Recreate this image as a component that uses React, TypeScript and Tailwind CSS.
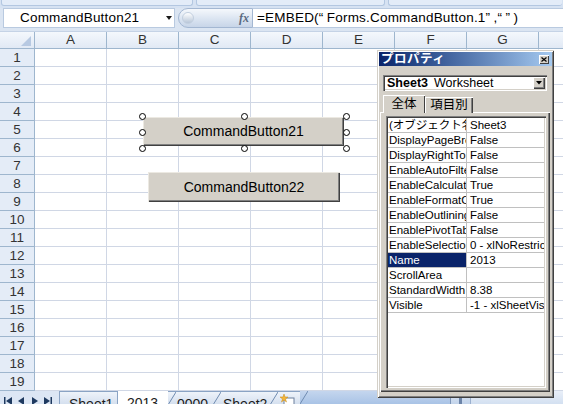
import React from "react";

const FONT = "font-['Liberation_Sans','Noto_Sans_CJK_JP',sans-serif]";

const COLS = ["A", "B", "C", "D", "E", "F", "G"];
const ROWS = Array.from({ length: 19 }, (_, i) => i + 1);

const PROPS: [string, string][] = [
  ["(オブジェクト名)", "Sheet3"],
  ["DisplayPageBreaks", "False"],
  ["DisplayRightToLeft", "False"],
  ["EnableAutoFilter", "False"],
  ["EnableCalculation", "True"],
  ["EnableFormatConditionsCalculation", "True"],
  ["EnableOutlining", "False"],
  ["EnablePivotTable", "False"],
  ["EnableSelection", "0 - xlNoRestrictions"],
  ["Name", "2013"],
  ["ScrollArea", ""],
  ["StandardWidth", "8.38"],
  ["Visible", "-1 - xlSheetVisible"],
];

// selection handles around CommandButton21 (centre points)
const HANDLES: [number, number][] = [
  [142, 116], [244, 116], [346, 116],
  [142, 132], [346, 132],
  [142, 148], [244, 148], [346, 148],
];

// quote marks get a wider cell, like the Japanese UI font draws them
function Q({ c }: { c: string }) {
  return <span className="inline-block w-[8px] text-left">{c}</span>;
}

function FormulaBar() {
  return (
    <>
      {/* ribbon bottom edge */}
      <div className="h-[8px] bg-[#d6e2f2] flex gap-[3px] px-[1px]">
        <div className="w-[192px] h-[6px] rounded-b-[3px] border-b border-x border-[#b3c7e1] bg-[#e3ecf8]" />
        <div className="w-[189px] h-[6px] rounded-b-[3px] border-b border-x border-[#b3c7e1] bg-[#e3ecf8]" />
        <div className="flex-1 h-[6px] rounded-b-[3px] border-b border-l border-[#b3c7e1] bg-[#e3ecf8]" />
      </div>

      <div className="flex h-[21px] bg-[#dbe5f2]">
        <div className="ml-[3px] w-[172px] h-[20px] bg-white border border-[#b9cae0] relative flex items-center">
          <span className="pl-[16px] text-[13.5px] leading-none text-black tracking-[0.2px]">CommandButton21</span>
          <svg className="absolute left-[162px] top-[7px]" width="6" height="4" viewBox="0 0 6 4">
            <path d="M0 0H6L3 4Z" fill="#1a1a1a" />
          </svg>
        </div>
        <div className="ml-[3px] w-[75px] h-[20px] rounded-l-full border border-[#a3b7d2] bg-gradient-to-b from-[#f5f8fc] via-[#dde6f2] to-[#c7d5e8] relative flex items-center justify-end pr-[3px]">
          <div className="absolute left-[3px] top-[3px] w-[12px] h-[12px] rounded-full bg-gradient-to-b from-[#ffffff] to-[#b8c6d8] border border-[#c2cfdf]" />
          <span className="font-['Liberation_Serif',serif] italic font-bold text-[12px] leading-none text-[#5a6a80]">fx</span>
        </div>
        <div className="flex-1 h-[20px] bg-white border-y border-[#b9cae0] flex items-center pl-[4px]">
          <span className="text-[13.5px] leading-none text-black whitespace-nowrap tracking-[0.2px]">
            =EMBED(<Q c="“" />Forms.CommandButton.1<Q c="”" />,<Q c="“" /><Q c="”" />)
          </span>
        </div>
      </div>
      <div className="h-[3px] bg-[#dbe5f2] border-b border-[#c5d3e6]" />
    </>
  );
}

function Sheet() {
  return (
    <div className="text-[13.5px] text-[#333]">
      {/* column headers */}
      <div className="flex h-[17px] bg-gradient-to-b from-[#f4f8fd] to-[#e1e9f5] border-b border-[#9eb6ce]">
        <div className="w-[35px] border-r border-[#9eb6ce] relative">
          <svg className="absolute right-[3px] bottom-[2px]" width="10" height="10" viewBox="0 0 10 10">
            <path d="M10 0V10H0Z" fill="#b7c9e2" />
          </svg>
        </div>
        {COLS.map((c) => (
          <div key={c} className="w-[72px] border-r border-[#9eb6ce] flex items-center justify-center leading-none">
            {c}
          </div>
        ))}
        <div className="flex-1" />
      </div>

      {ROWS.map((r) => (
        <div key={r} className="flex h-[18px]">
          <div className="w-[35px] bg-[#e4ecf7] border-r border-b border-[#9eb6ce] flex items-center justify-center leading-none">
            {r}
          </div>
          {COLS.map((c) => (
            <div key={c} className="w-[72px] bg-white border-r border-b border-[#d0d7e5]" />
          ))}
          <div className="flex-1 bg-white border-b border-[#d0d7e5]" />
        </div>
      ))}
    </div>
  );
}

function TabSlant() {
  return (
    <svg className="absolute left-0 top-0" width="8" height="13" viewBox="0 0 8 13">
      <path d="M0 13L8 0" stroke="#6f8bb1" strokeWidth="1" />
    </svg>
  );
}

function SheetTabs() {
  return (
    <div className="h-[13px] flex bg-[#c9d9ee] overflow-hidden text-[14px] text-[#1c1c1c]">
      <div className="w-[60px] bg-[#dce6f4] border-r border-[#8aa3c4] flex items-start pl-[4px] pt-[6px]">
        <svg width="48" height="8" viewBox="0 0 48 8">
          <rect x="0" y="0" width="1.5" height="8" fill="#1f3a60" />
          <path d="M8 0V8L2 4Z" fill="#1f3a60" />
          <path d="M20 0V8L14 4Z" fill="#1f3a60" />
          <path d="M28 0V8L34 4Z" fill="#1f3a60" />
          <path d="M40 0V8L46 4Z" fill="#1f3a60" />
          <rect x="46.5" y="0" width="1.5" height="8" fill="#1f3a60" />
        </svg>
      </div>
      <div className="w-[58px] bg-gradient-to-b from-[#eef3fa] to-[#d5e0ef] border-r border-t border-[#8aa3c4] pl-[9px] pt-[4px] leading-[16px]">Sheet1</div>
      <div className="w-[50px] bg-white pl-[9px] pt-[4px] leading-[16px]">2013</div>
      <div className="w-[45px] relative bg-gradient-to-b from-[#eef3fa] to-[#d5e0ef] border-t border-[#8aa3c4] pl-[9px] pt-[4px] leading-[16px]">
        <TabSlant />
        0000
      </div>
      <div className="w-[57px] relative bg-gradient-to-b from-[#eef3fa] to-[#d5e0ef] border-t border-[#8aa3c4] pl-[10px] pt-[4px] leading-[16px]">
        <TabSlant />
        Sheet2
      </div>
      <div className="w-[30px] relative bg-gradient-to-b from-[#eef3fa] to-[#d5e0ef] border-t border-[#8aa3c4]">
        <TabSlant />
        <svg className="absolute left-[10px] top-[2px]" width="16" height="11" viewBox="0 0 16 11">
          <rect x="4" y="4" width="10" height="8" fill="#ffffff" stroke="#6a7e9c" />
          <path d="M4 0L5 3L8 3L5.5 5L6.5 8L4 6L1.5 8L2.5 5L0 3L3 3Z" fill="#f3b53a" stroke="#c98a12" strokeWidth="0.5" />
        </svg>
      </div>
      <div className="w-[10px] relative bg-gradient-to-b from-[#c4d6ee] to-[#a9c3e6]">
        <TabSlant />
      </div>
      <div className="w-[140px] bg-gradient-to-b from-[#c4d6ee] to-[#a9c3e6]" />
      <div className="w-[20px] bg-gradient-to-b from-[#dfe8f5] to-[#c3d4eb] border-l border-[#7d95b8] relative">
        <div className="absolute left-[8px] top-[4px] w-[3px] h-[9px] bg-[#6c84a8]" />
      </div>
      <div className="flex-1 bg-gradient-to-b from-[#e9eff8] to-[#d3e0f1] border-l border-[#9bb0cf]" />
    </div>
  );
}

function CommandButton({ label, className }: { label: string; className: string }) {
  return (
    <div
      className={`absolute bg-[#d4d0c8] flex items-center justify-center text-[14px] text-black shadow-[inset_1px_1px_0_#ece9e2,inset_-1px_-1px_0_#404040,inset_-2px_-2px_0_#808080] ${className}`}
    >
      {label}
    </div>
  );
}

function PropertiesWindow() {
  return (
    <div className="absolute left-[377px] top-[50px] w-[177px] h-[348px] bg-[#d4d0c8] p-[2px] flex flex-col text-black shadow-[inset_1px_1px_0_#d4d0c8,inset_-1px_-1px_0_#404040,inset_2px_2px_0_#ffffff,inset_-2px_-2px_0_#808080]">
      {/* title bar */}
      <div className="h-[14px] flex items-center justify-between bg-gradient-to-r from-[#0a246a] to-[#a6caf0] pl-[2px] pr-[3px]">
        <span className="text-white font-bold text-[12.5px] leading-none tracking-[0.5px]">プロパティ</span>
        <div className="w-[10px] h-[9px] bg-[#d4d0c8] flex items-center justify-center shadow-[inset_1px_1px_0_#ffffff,inset_-1px_-1px_0_#404040]">
          <svg width="6" height="5" viewBox="0 0 6 5">
            <path d="M0.5 0.5L5.5 4.5M5.5 0.5L0.5 4.5" stroke="#000" strokeWidth="1.2" />
          </svg>
        </div>
      </div>

      {/* object combo */}
      <div className="mt-[9px] ml-[4px] mr-[5px] h-[16px] bg-white flex items-center justify-between pl-[4px] pr-[2px] shadow-[inset_1px_1px_0_#808080,inset_2px_2px_0_#404040,inset_-1px_-1px_0_#ffffff,inset_-2px_-2px_0_#d4d0c8]">
        <span className="text-[12.5px] leading-none whitespace-nowrap">
          <span className="font-bold">Sheet3</span>
          <span className="ml-[6px]">Worksheet</span>
        </span>
        <div className="w-[12px] h-[12px] bg-[#d4d0c8] flex items-center justify-center shadow-[inset_1px_1px_0_#ffffff,inset_-1px_-1px_0_#404040,inset_-2px_-2px_0_#808080]">
          <svg width="6" height="4" viewBox="0 0 6 4">
            <path d="M0 0H6L3 3.5Z" fill="#000" />
          </svg>
        </div>
      </div>

      {/* tabs */}
      <div className="mt-[4px] ml-[4px] flex items-end h-[18px] -mb-[1px] relative z-10">
        <div className="w-[42px] h-[18px] bg-[#d4d0c8] flex items-center justify-center text-[12.5px] leading-none shadow-[inset_1px_1px_0_#ffffff,inset_-1px_0_0_#404040]">
          全体
        </div>
        <div className="w-[48px] h-[16px] bg-[#d4d0c8] flex items-center justify-center text-[12.5px] leading-none shadow-[inset_1px_1px_0_#ffffff,inset_-1px_0_0_#404040,inset_-2px_0_0_#808080]">
          項目別
        </div>
      </div>

      {/* tab panel */}
      <div className="ml-[1px] mr-[2px] mb-[4px] flex-1 p-[4px] pl-[6px] shadow-[inset_1px_1px_0_#ffffff,inset_-1px_-1px_0_#404040,inset_-2px_-2px_0_#808080]">
        <div className="h-full bg-white p-[2px] shadow-[inset_1px_1px_0_#808080,inset_2px_2px_0_#404040,inset_-1px_-1px_0_#ffffff,inset_-2px_-2px_0_#d4d0c8]">
          {PROPS.map(([name, value]) => {
            const sel = name === "Name";
            return (
              <div key={name} className="flex h-[15px] border-b border-[#c0c0c0] text-[11.5px] leading-[14px]">
                <div
                  className={`w-[79px] border-r border-[#c0c0c0] pl-[1px] overflow-hidden whitespace-nowrap ${sel ? "bg-[#0a246a] text-white" : ""}`}
                >
                  {name}
                </div>
                <div className="flex-1 pl-[3px] overflow-hidden whitespace-nowrap">{value}</div>
              </div>
            );
          })}
        </div>
      </div>
    </div>
  );
}

export default function App() {
  return (
    <div className={`relative w-[563px] h-[404px] overflow-hidden bg-white ${FONT}`}>
      <FormulaBar />
      <Sheet />
      <SheetTabs />

      <CommandButton label="CommandButton21" className="left-[143px] top-[117px] w-[201px] h-[29px]" />
      <CommandButton label="CommandButton22" className="left-[148px] top-[172px] w-[192px] h-[30px]" />

      {HANDLES.map(([x, y]) => (
        <div
          key={`${x}-${y}`}
          className="absolute w-[7px] h-[7px] rounded-full bg-white border border-black"
          style={{ left: x - 3.5, top: y - 3.5 }}
        />
      ))}

      <PropertiesWindow />
    </div>
  );
}
